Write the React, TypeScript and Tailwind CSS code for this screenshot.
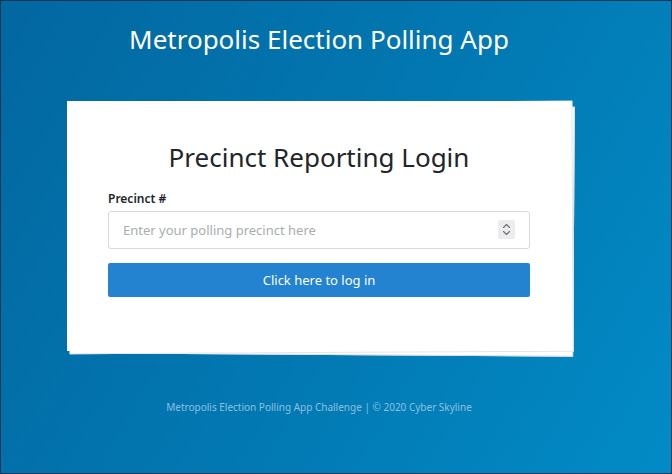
import React from "react";

export default function App() {
  return (
    <div
      className="w-[672px] h-[474px] border border-[#0b3754] bg-[linear-gradient(120deg,#0367a0_0%,#0279b3_55%,#028bc6_100%)] overflow-hidden"
      style={{ fontFamily: '"Noto Sans", "Open Sans", sans-serif' }}
    >
      <div className="w-[636px] flex flex-col items-center">
        <h1 className="mt-[20px] text-[26px] leading-[36px] text-white font-normal">
          Metropolis Election Polling App
        </h1>

        <div className="relative mt-[44px] w-[504px] h-[250px]">
          {/* stacked paper layers */}
          <div className="absolute left-[4px] top-[4px] right-[-3px] bottom-[-4px] bg-white border border-[#dcdcdc] rotate-[0.4deg]" />
          <div className="absolute left-[2px] top-[1px] right-[-2px] bottom-[-2px] bg-white border border-[#e6e6e6] rotate-[-0.3deg]" />
          <div className="relative h-full bg-white flex flex-col items-center px-[41px]">
            <h2 className="mt-[38px] text-[26px] leading-[36px] text-[#212529] font-normal">
              Precinct Reporting Login
            </h2>
            <div className="w-full mt-[16px]">
              <label className="block text-[12px] leading-[16px] font-semibold text-[#212529]">
                Precinct #
              </label>
              <div className="relative mt-[4px] h-[38px] border border-[#d9d9d9] rounded-[3px] bg-white">
                <input
                  type="text"
                  placeholder="Enter your polling precinct here"
                  className="w-full h-full pl-[14px] pr-[40px] text-[13px] text-[#495057] placeholder:text-[#a9adb1] bg-transparent outline-none"
                />
                <div className="absolute right-[14px] top-[8px] w-[17px] h-[19px] bg-[#ececef] rounded-[2px] flex items-center justify-center">
                  <svg width="9" height="13" viewBox="0 0 9 13" fill="none" stroke="#707070" strokeWidth="1.1" strokeLinecap="round" strokeLinejoin="round">
                    <path d="M1.5 4.5 L4.5 1.5 L7.5 4.5" />
                    <path d="M1.5 8.5 L4.5 11.5 L7.5 8.5" />
                  </svg>
                </div>
              </div>
              <button className="mt-[14px] w-full h-[34px] bg-[#2383d0] rounded-[2px] text-white text-[13px] leading-[34px]">
                Click here to log in
              </button>
            </div>
          </div>
        </div>

        <div className="mt-[49px] text-[10px] leading-[14px] text-[#8ec0de]">
          Metropolis Election Polling App Challenge | © 2020 Cyber Skyline
        </div>
      </div>
    </div>
  );
}
